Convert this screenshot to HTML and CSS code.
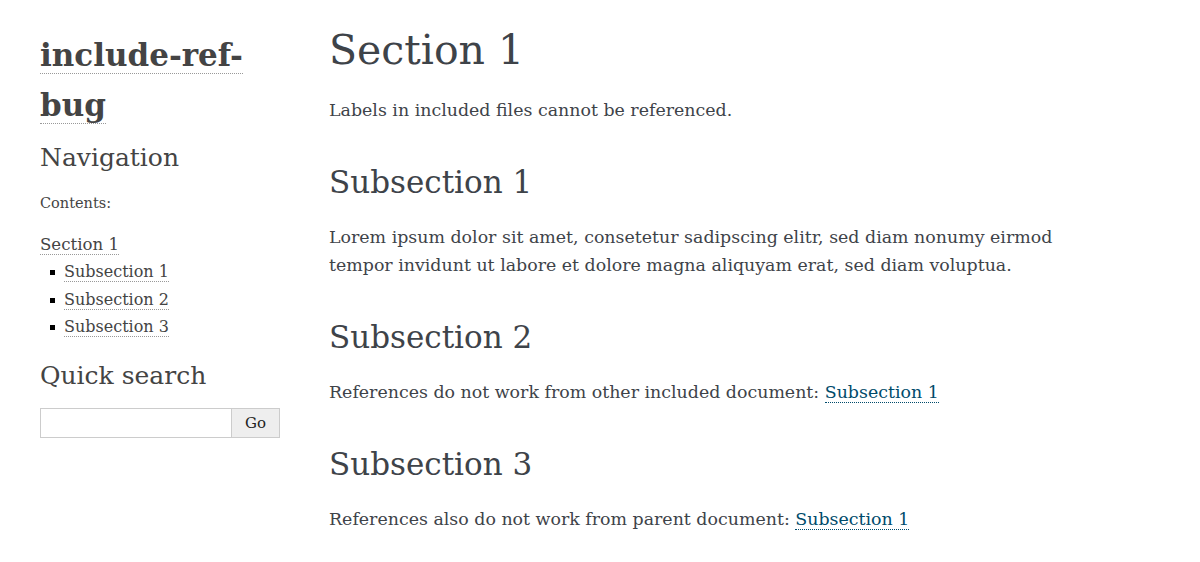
FILE: index.html
```html
<!DOCTYPE html>
<html lang="en">
<head>
<meta charset="utf-8">
<title>Section 1 — include-ref-bug</title>
<link rel="stylesheet" href="styles.css">
</head>
<body>
<div class="page">
  <aside class="sidebar">
    <h1 class="logo"><a href="#">include-ref-bug</a></h1>
    <h3 class="side-head">Navigation</h3>
    <p class="caption">Contents:</p>
    <ul class="toc">
      <li><a class="toc-top" href="#">Section 1</a>
        <ul class="toc-sub">
          <li><a href="#">Subsection 1</a></li>
          <li><a href="#">Subsection 2</a></li>
          <li><a href="#">Subsection 3</a></li>
        </ul>
      </li>
    </ul>
    <h3 class="side-head search-head">Quick search</h3>
    <form class="searchbox">
      <input class="search-input" type="text" name="q" aria-label="search">
      <button class="search-go" type="button">Go</button>
    </form>
  </aside>
  <main class="body">
    <h1 class="h1">Section 1</h1>
    <p class="para">Labels in included files cannot be referenced.</p>
    <h2 class="h2">Subsection 1</h2>
    <p class="para">Lorem ipsum dolor sit amet, consetetur sadipscing elitr, sed diam nonumy eirmod tempor invidunt ut labore et dolore magna aliquyam erat, sed diam voluptua.</p>
    <h2 class="h2">Subsection 2</h2>
    <p class="para">References do not work from other included document: <a class="ref" href="#">Subsection 1</a></p>
    <h2 class="h2">Subsection 3</h2>
    <p class="para">References also do not work from parent document: <a class="ref" href="#">Subsection 1</a></p>
  </main>
</div>
</body>
</html>
```

FILE: styles.css
```css
html, body {
  margin: 0;
  padding: 0;
  background: #fff;
}
body {
  font-family: "DejaVu Serif", "Liberation Serif", serif;
  color: #3E4349;
}
.page {
  display: flex;
  align-items: flex-start;
  padding: 0 0 0 40px;
  gap: 49px;
}
.sidebar {
  width: 240px;
  flex: none;
  color: #444;
  padding-top: 30px;
}
.logo {
  margin: 0;
  font-size: 31px;
  line-height: 50px;
  font-weight: bold;
  width: 230px;
}
.logo a {
  color: #444;
  text-decoration: none;
  border-bottom: 1px dotted #999;
}
.side-head {
  margin: 12px 0 0;
  font-size: 25px;
  line-height: 32px;
  font-weight: normal;
  color: #444;
}
.caption {
  margin: 19px 0 0;
  font-size: 14.5px;
  line-height: 20px;
}
.toc {
  margin: 17.5px 0 0;
  padding: 0;
  list-style: none;
  font-size: 16px;
  line-height: 27.5px;
}
.toc a {
  color: #444;
  text-decoration: none;
  border-bottom: 1px dotted #999;
}
.toc-top {
  font-size: 16.6px;
}
.toc-sub {
  margin: 0;
  padding: 0 0 0 24px;
  list-style: none;
}
.toc-sub li {
  position: relative;
}
.toc-sub li::before {
  content: "";
  position: absolute;
  left: -14px;
  top: 12px;
  width: 5px;
  height: 5px;
  background: #000;
}
.search-head {
  margin-top: 19px;
}
.searchbox {
  display: flex;
  margin: 16px 0 0;
  width: 240px;
}
.search-input {
  box-sizing: border-box;
  width: 192px;
  height: 30px;
  margin: 0;
  border: 1px solid #ccc;
  font-family: inherit;
  font-size: 16px;
  padding: 2px 4px;
}
.search-go {
  box-sizing: border-box;
  width: 48px;
  height: 30px;
  margin: 0;
  border: 1px solid #ccc;
  border-left: none;
  background: #eee;
  font-family: inherit;
  font-size: 15px;
  color: #222;
  padding: 0;
}
.body {
  flex: 1;
  padding-top: 25px;
  max-width: 760px;
}
.h1 {
  margin: 0 0 21px;
  font-size: 41px;
  line-height: 50px;
  font-weight: normal;
}
.h2 {
  margin: 38px 0 21px;
  font-size: 31px;
  line-height: 40px;
  font-weight: normal;
}
.para {
  margin: 0;
  font-size: 17.4px;
  line-height: 28px;
}
.ref {
  color: #004B6B;
  text-decoration: none;
  border-bottom: 1px dotted #004B6B;
}
```
